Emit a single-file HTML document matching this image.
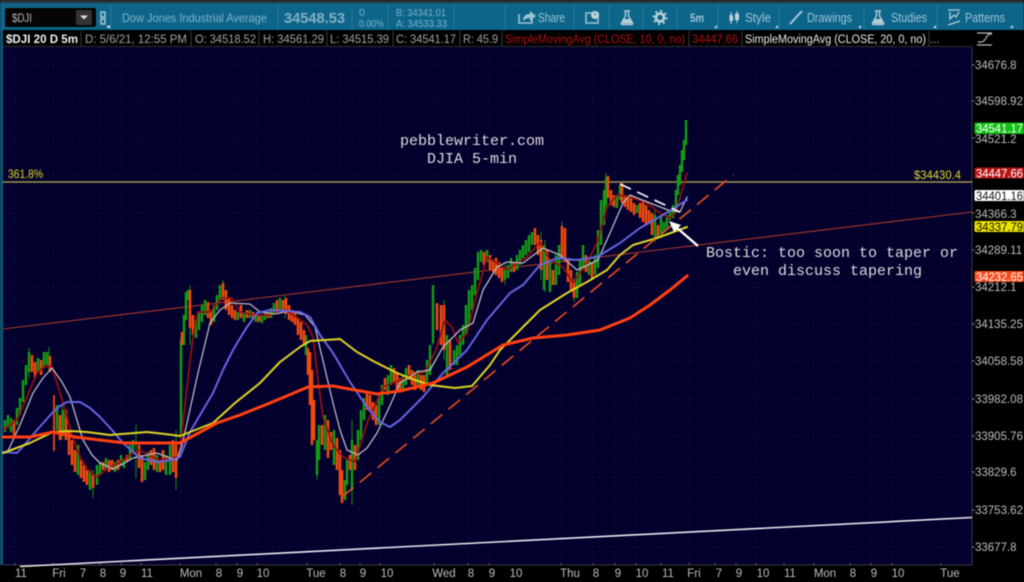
<!DOCTYPE html>
<html><head><meta charset="utf-8"><title>$DJI</title>
<style>
html,body{margin:0;padding:0;background:#000;width:1024px;height:582px;overflow:hidden}
svg{display:block;filter:blur(.4px)}
text{font-family:"Liberation Sans",sans-serif}
.m{font-family:"Liberation Mono",monospace;font-size:15px;fill:#dcdcdc}
.h{font-size:11.5px;fill:#a0a0a0}
.a{font-size:11.5px;fill:#bcbcbc}
.t{font-size:11.5px;fill:#bcbcbc;text-anchor:middle}
.b{font-size:12px;fill:#7fb0c8}
.l{font-size:11.5px;fill:#fff}
.d{font-size:11.5px;fill:#111}
polyline{stroke-linejoin:round;stroke-linecap:round}
</style></head><body>
<svg width="1024" height="582" viewBox="0 0 1024 582" xmlns="http://www.w3.org/2000/svg">
<rect width="1024" height="582" fill="#000"/>
<rect width="1024" height="3" fill="#2c3238"/>
<rect y="3" width="1024" height="27" fill="#0d668a"/>
<rect x="0" y="30" width="3" height="535" fill="#0c5a78"/>
<rect x="3" y="47" width="969" height="518" fill="#03002d"/>
<!-- toolbar -->
<rect x="5" y="8" width="91" height="19" rx="2" fill="#050505"/>
<text x="12" y="22" font-size="12" fill="#b8b8b8" textLength="20" lengthAdjust="spacingAndGlyphs">$DJI</text>
<rect x="76" y="10" width="16" height="15" rx="2" fill="#333"/>
<path d="M80 15.5h8l-4 4z" fill="#ddd"/>
<path d="M101 12h4v5h-4zM101 19h4v5h-4z" fill="none" stroke="#a8c4d0" stroke-width="1.5"/>
<path d="M109 27h-3l3-2z" fill="#ddd"/>
<path d="M111 5v25M278 5v25M352 5v25M388 5v25M454 5v25M505 5v25M574 5v25M609 5v25M643 5v25M677 5v25M718 5v25M779 5v25M864 5v25M937 5v25" stroke="#1e7a9c" stroke-width="1"/>
<text class="b" x="122" y="22" textLength="145" lengthAdjust="spacingAndGlyphs">Dow Jones Industrial Average</text>
<text x="284" y="23" font-size="15" font-weight="bold" fill="#84aec4" textLength="61" lengthAdjust="spacingAndGlyphs">34548.53</text>
<text x="359" y="16" font-size="10.5" fill="#7fb0c8">0</text>
<text x="359" y="27" font-size="10.5" fill="#7fb0c8" textLength="25" lengthAdjust="spacingAndGlyphs">0.00%</text>
<text x="396" y="16" font-size="10.5" fill="#7fb0c8" textLength="50" lengthAdjust="spacingAndGlyphs">B: 34341.01</text>
<text x="396" y="27" font-size="10.5" fill="#7fb0c8" textLength="51" lengthAdjust="spacingAndGlyphs">A: 34533.33</text>
<path d="M519 14v9h13v-5" fill="none" stroke="#a0c4d4" stroke-width="1.6"/>
<path d="M523 21c0-5 3-7 7-7v-3l6 5-6 5v-3c-3 0-5 1-7 3z" fill="#a0c4d4"/>
<text x="538" y="22" font-size="12.5" fill="#9cc2d4" textLength="27" lengthAdjust="spacingAndGlyphs">Share</text>
<path d="M586 13h12v10h-12z" fill="none" stroke="#a0c4d4" stroke-width="1.5"/><circle cx="595" cy="15" r="4" fill="#c0d4dc"/><path d="M595 13v2.5" stroke="#0d668a"/>
<path d="M624 11h6M625.500 11v5l-4 7q-.5 1.500 1 1.500h9q1.500 0 1-1.500l-4-7v-5z" fill="none" stroke="#b4ccd8" stroke-width="1.400"/><path d="M623 19h8l2 4.500h-12z" fill="#b4ccd8"/>
<circle cx="660" cy="17.500" r="4" fill="none" stroke="#c0d4dc" stroke-width="2.600"/><circle cx="660" cy="17.500" r="6.500" fill="none" stroke="#c0d4dc" stroke-width="2" stroke-dasharray="2 3.100"/>
<text x="690" y="22" font-size="11.500" font-weight="bold" fill="#a0c4d4" textLength="14" lengthAdjust="spacingAndGlyphs">5m</text>
<path d="M731 12v12M737 11v12" stroke="#c0d4dc"/><rect x="729.500" y="15" width="3.500" height="6" fill="#c0d4dc"/><rect x="735" y="13.500" width="4" height="6.500" fill="#c0d4dc"/>
<text x="745" y="22" font-size="12.500" fill="#9cc2d4" textLength="26" lengthAdjust="spacingAndGlyphs">Style</text>
<path d="M790 24l12-13" stroke="#b4ccd8" stroke-width="1.800"/>
<text x="807" y="22" font-size="12.500" fill="#9cc2d4" textLength="45" lengthAdjust="spacingAndGlyphs">Drawings</text>
<path d="M875 11h6M876.500 11v5l-4 7q-.5 1.500 1 1.500h9q1.500 0 1-1.500l-4-7v-5z" fill="none" stroke="#b4ccd8" stroke-width="1.400"/><path d="M874 19h8l2 4.500h-12z" fill="#b4ccd8"/>
<text x="891" y="22" font-size="12.500" fill="#9cc2d4" textLength="36" lengthAdjust="spacingAndGlyphs">Studies</text>
<path d="M948 10h12M950 12v7l4-4 2 2 3-5M948 25l12-4" fill="none" stroke="#b4ccd8" stroke-width="1.300"/>
<text x="965" y="22" font-size="12.500" fill="#9cc2d4" textLength="40" lengthAdjust="spacingAndGlyphs">Patterns</text>
<path d="M717 28h-3l3-3zM778 28h-3l3-3zM861 28h-3l3-3zM936 28h-3l3-3zM1013 28h-3l3-3zM716 28h-3zM110 28h-3l3-3z" fill="#d8e4ea"/>
<!-- header row -->
<path d="M81 31v15M191 31v15M259 31v15M327 31v15M393 31v15M460 31v15M502 31v15M689 31v15M742 31v15M929 31v15" stroke="#3a3a3a"/>
<path d="M3 46.500H972" stroke="#2c2c2c"/>
<text x="6" y="43" font-size="12" font-weight="bold" fill="#f0f0f0" textLength="72" lengthAdjust="spacingAndGlyphs">$DJI 20 D 5m</text>
<text class="h" x="85" y="43" textLength="102" lengthAdjust="spacingAndGlyphs">D: 5/6/21, 12:55 PM</text>
<text class="h" x="195" y="43" textLength="61" lengthAdjust="spacingAndGlyphs">O: 34518.52</text>
<text class="h" x="263" y="43" textLength="61" lengthAdjust="spacingAndGlyphs">H: 34561.29</text>
<text class="h" x="330" y="43" textLength="59" lengthAdjust="spacingAndGlyphs">L: 34515.39</text>
<text class="h" x="396" y="43" textLength="60" lengthAdjust="spacingAndGlyphs">C: 34541.17</text>
<text class="h" x="463" y="43" textLength="35" lengthAdjust="spacingAndGlyphs">R: 45.9</text>
<text class="h" x="505" y="43" style="fill:#b01010" textLength="180" lengthAdjust="spacingAndGlyphs">SimpleMovingAvg (CLOSE, 10, 0, no)</text>
<text class="h" x="692" y="43" style="fill:#b01010" textLength="46" lengthAdjust="spacingAndGlyphs">34447.66</text>
<text class="h" x="745" y="43" style="fill:#e8e8e8" textLength="181" lengthAdjust="spacingAndGlyphs">SimpleMovingAvg (CLOSE, 20, 0, no)</text>
<text class="h" x="930" y="43">...</text>
<path d="M977 33h15M977 45h15M978 42h3q3 0 5-4t4-4h2" fill="none" stroke="#b8b8b8" stroke-width="1.200"/>
<!-- grid -->
<path d="M3 65H972M3 101H972M3 138H972M3 175H972M3 213H972M3 250H972M3 287H972M3 324H972M3 361H972M3 399H972M3 436H972M3 472H972M3 510H972M3 547H972" stroke="#1e1e48" stroke-dasharray="1 4"/>
<path d="M15 47V565M53 47V565M80 47V565M100 47V565M121 47V565M141 47V565M180 47V565M216 47V565M237 47V565M257 47V565M307 47V565M340 47V565M360 47V565M380 47V565M434 47V565M468 47V565M489 47V565M561 47V565M593 47V565M615 47V565M636 47V565M661 47V565M689 47V565M715 47V565M736 47V565M756 47V565M784 47V565M814 47V565M850 47V565M871 47V565M892 47V565M941 47V565" stroke="#1e1e48" stroke-dasharray="1 4"/>
<path d="M15 565v-2M53 565v-2M80 565v-2M100 565v-2M121 565v-2M141 565v-2M180 565v-2M216 565v-2M237 565v-2M257 565v-2M307 565v-2M340 565v-2M360 565v-2M380 565v-2M434 565v-2M468 565v-2M489 565v-2M561 565v-2M593 565v-2M615 565v-2M636 565v-2M661 565v-2M689 565v-2M715 565v-2M736 565v-2M756 565v-2M784 565v-2M814 565v-2M850 565v-2M871 565v-2M892 565v-2M941 565v-2" stroke="#666"/>
<path d="M972 47V565H3" fill="none" stroke="#3a3a44"/>
<!-- level lines -->
<path d="M3 182H972" stroke="#a09a48" stroke-width="1.400"/>
<path d="M3 329L972 212" stroke="#a83a28" stroke-width="1.100"/>
<path d="M20 566.500L972 517.500" stroke="#e8e8f0" stroke-width="1.600"/>
<!-- wicks -->
<path d="M29 348V378M49 347V372M62 405V440M93 470V498M136 425V478M176 430V490M181 337V450M190 285V345M223 280V300M285 295V318M352 420V505M317 440V480M342 470V503M433 285V345M444 300V360M505 265V285M545 240V292M562 222V260M574 278V302M606 173V210M655 210V242M541 232V280" stroke="#128a12" stroke-width="1" fill="none"/>
<!-- green candles -->
<path fill="none" stroke="#149a14" stroke-width="2.500" d="M5 420V432M8 415V428M11 418V432M17 408V425M20 398V415M23 380V402M26 365V385M29 352V372M38 358V372M44 352V368M47 352V365M57 405V430M63 410V432M78 445V475M90 470V490M97 465V485M100 462V475M106 458V470M115 462V472M121 455V465M124 460V468M130 445V460M133 440V452M145 462V480M148 452V470M157 455V472M166 455V475M170 445V475M181 340V437M184 315V345M186 292V320M188 290V300M196 320V338M199 312V330M202 305V322M205 300V315M214 305V322M217 295V310M220 285V300M238 312V320M244 312V322M250 310V318M256 314V322M262 316V323M265 312V320M271 308V318M274 303V314M280 298V310M306 335V355M317 440V475M319 425V460M325 415V450M334 430V465M345 480V500M347 460V485M352 440V490M358 430V460M361 410V440M364 398V420M379 395V425M382 385V405M388 375V395M391 365V385M403 375V390M406 368V385M418 370V388M427 360V385M430 345V375M433 285V343M447 335V375M454 350V365M457 345V365M460 335V355M463 325V345M466 305V335M469 290V325M472 285V310M475 268V295M478 252V280M481 250V262M487 250V262M505 270V280M508 265V278M511 258V272M517 255V270M520 250V265M523 245V258M526 240V255M529 235V252M532 232V245M544 245V290M550 262V292M556 255V285M559 245V275M577 272V298M580 260V285M583 245V270M589 258V275M595 255V275M598 230V268M601 200V245M604 190V225M606 178V205M617 195V208M620 185V200M637 205V213M655 215V240M661 215V235M664 222V232M667 215V228M670 210V220M673 205V218M676 190V210M678 175V195M680 165V185M682 150V172M684 140V160M686 120V145"/>
<!-- orange candles -->
<path fill="none" stroke="#f04a0e" stroke-width="2.600" d="M14 420V435M32 355V372M35 362V378M41 360V375M50 356V372M60 415V440M66 410V440M69 430V455M72 440V465M75 450V472M81 460V478M84 465V482M87 470V485M93 475V488M103 462V470M109 460V472M112 460V470M118 460V470M127 455V462M139 445V468M142 455V482M151 450V465M154 448V470M160 462V472M163 450V470M173 440V472M176 445V478M182 332V345M190 290V328M193 315V335M208 302V318M211 310V325M223 283V300M226 290V310M229 298V315M232 305V318M235 310V320M241 305V318M247 310V318M253 312V320M259 316V322M268 312V318M277 300V312M283 300V312M286 298V314M289 305V320M292 310V322M295 312V325M298 318V335M301 322V340M304 330V345M308 348V375M310 352V405M312 370V445M314 400V440M322 425V445M328 420V458M331 432V450M337 438V470M340 450V495M342 470V503M350 455V470M355 445V470M367 392V410M370 395V412M373 402V420M376 405V425M385 378V390M394 368V382M397 372V390M400 378V392M409 365V380M412 370V385M415 372V390M421 375V390M424 375V392M437 303V330M441 305V345M444 305V350M450 340V370M484 252V265M490 255V270M493 260V272M496 258V275M499 262V278M502 268V282M514 262V272M535 228V245M538 235V255M541 240V270M547 250V280M553 270V285M562 226V258M565 228V262M568 258V282M571 270V290M574 280V298M586 255V272M592 262V278M608 176V198M611 190V205M614 195V207M622 183V203M625 195V207M628 198V210M631 195V212M634 203V215M640 203V218M643 200V222M646 205V225M649 210V223M652 213V235M658 225V238"/>
<path d="M54 395V451" stroke="#f04a0e" stroke-width="1.800"/>
<!-- SMAs -->
<polyline fill="none" stroke="#961010" stroke-width="1.700" points="3,430 17,420 37,373 45,366 52,367 63,403 72,435 80,457 88,470 97,477 108,468 120,462 130,455 140,450 150,456 160,460 177,457 180,450 186,395 193,337 198,312 210,312 222,298 232,298 240,312 255,315 270,315 285,310 298,318 307,325 313,337 318,380 323,417 333,445 343,457 355,462 367,423 383,387 400,380 410,375 425,372 436,350 445,320 452,327 458,343 467,333 477,293 487,257 497,263 507,270 527,257 540,242 550,260 563,267 573,283 587,263 597,243 607,207 617,195 630,197 647,203 660,213 670,218 676,212 682,190 687,173"/>
<polyline fill="none" stroke="#b8b8c4" stroke-width="1.300" points="7,453 20,425 33,393 43,378 52,368 62,382 70,397 83,440 92,455 100,463 113,469 123,464 133,458 157,453 170,458 177,460 182,445 187,423 198,373 210,323 220,310 230,303 250,304 260,312 275,314 290,311 305,315 315,327 324,365 333,403 340,430 347,450 358,455 367,448 377,433 388,410 400,383 417,372 430,370 443,347 460,330 473,323 483,290 497,267 507,262 523,263 543,248 560,255 577,270 598,260 610,233 623,203 630,195 650,203 668,210 680,212 687,197"/>
<polyline fill="none" stroke="#6464e0" stroke-width="2" points="3,452 17,453 27,442 37,430 53,412 60,406 67,402 80,402 90,408 100,417 112,430 123,443 140,458 157,462 172,460 180,457 190,432 200,415 213,393 223,370 233,350 245,330 257,313 270,310 285,311 300,312 310,317 320,335 333,353 350,382 367,407 380,422 390,427 400,420 423,397 443,373 467,350 487,320 510,293 523,285 540,265 557,258 577,260 597,257 620,243 640,228 663,215 687,200"/>
<polyline fill="none" stroke="#dcd420" stroke-width="2" points="3,453 30,443 53,432 70,431 87,432 110,435 147,432 165,434 180,436 213,423 235,403 260,383 280,362 300,347 310,341 325,340 340,339 357,352 375,362 397,373 415,380 430,385 455,388 472,386 490,365 500,350 517,333 540,310 567,293 587,282 607,270 620,255 633,245 657,238 687,227"/>
<polyline fill="none" stroke="#ff4010" stroke-width="3" points="3,437 30,437 53,432 75,437 100,440 125,443 150,443 180,443 217,423 240,415 270,403 308,387 333,386 377,394 400,391 433,383 467,367 503,345 533,338 567,335 600,330 630,318 650,305 670,290 687,276"/>
<!-- annotations -->
<path d="M342 497L733 175" stroke="#e04a20" stroke-width="1.700" stroke-dasharray="15 8"/>
<path d="M620 184L680 212" stroke="#f4f4f4" stroke-width="1.700" stroke-dasharray="12 7"/>
<path d="M698 246L676 227" stroke="#fff" stroke-width="2.400"/>
<path d="M669 221L681 225L674 232z" fill="#fff"/>
<text class="m" x="400" y="145">pebblewriter.com</text>
<text class="m" x="427" y="163">DJIA 5-min</text>
<text class="m" x="706" y="257">Bostic: too soon to taper or</text>
<text class="m" x="733" y="275">even discuss tapering</text>
<text x="8" y="178" font-size="12" fill="#e0dc20" textLength="35" lengthAdjust="spacingAndGlyphs">361.8%</text>
<text x="914" y="179" font-size="12" fill="#e0dc20" textLength="47" lengthAdjust="spacingAndGlyphs">$34430.4</text>
<!-- axis -->
<g>
<path d="M972 65h3M972 101h3M972 138h3M972 213h3M972 250h3M972 287h3M972 324h3M972 361h3M972 399h3M972 436h3M972 472h3M972 510h3M972 547h3" stroke="#777"/>
<text class="a" x="975" y="69">34676.8</text>
<text class="a" x="975" y="105">34598.92</text>
<text class="a" x="975" y="143">34521.2</text>
<text class="a" x="975" y="218">34366.3</text>
<text class="a" x="975" y="254">34289.11</text>
<text class="a" x="975" y="291">34212.1</text>
<text class="a" x="975" y="328">34135.25</text>
<text class="a" x="975" y="365">34058.58</text>
<text class="a" x="975" y="403">33982.08</text>
<text class="a" x="975" y="440">33905.76</text>
<text class="a" x="975" y="476">33829.6</text>
<text class="a" x="975" y="514">33753.62</text>
<text class="a" x="975" y="551">33677.8</text>
<rect x="974.500" y="122.500" width="50" height="11.500" rx="1.500" fill="#12c012"/><text class="l" x="976" y="132.500" textLength="47" lengthAdjust="spacingAndGlyphs">34541.17</text>
<rect x="974.500" y="167.500" width="50" height="11" rx="1.500" fill="#b41414"/><text class="l" x="976" y="177.500" textLength="47" lengthAdjust="spacingAndGlyphs">34447.66</text>
<rect x="974.500" y="190" width="50" height="11" rx="1.500" fill="#fff"/><text class="d" x="976" y="200" textLength="47" lengthAdjust="spacingAndGlyphs">34401.16</text>
<rect x="974.500" y="221" width="50" height="11" rx="1.500" fill="#ece400"/><text class="d" x="976" y="231" textLength="47" lengthAdjust="spacingAndGlyphs">34337.79</text>
<rect x="974.500" y="271" width="50" height="11" rx="1.500" fill="#fa4a1a"/><text class="l" x="976" y="281" textLength="47" lengthAdjust="spacingAndGlyphs">34232.65</text>
</g>
<text class="t" x="21" y="577">11</text><text class="t" x="59" y="577">Fri</text><text class="t" x="83" y="577">7</text><text class="t" x="103" y="577">8</text><text class="t" x="123" y="577">9</text><text class="t" x="147" y="577">11</text><text class="t" x="191" y="577">Mon</text><text class="t" x="219" y="577">8</text><text class="t" x="240" y="577">9</text><text class="t" x="263" y="577">10</text><text class="t" x="316" y="577">Tue</text><text class="t" x="343" y="577">8</text><text class="t" x="363" y="577">9</text><text class="t" x="387" y="577">10</text><text class="t" x="444" y="577">Wed</text><text class="t" x="471" y="577">8</text><text class="t" x="492" y="577">9</text><text class="t" x="516" y="577">10</text><text class="t" x="570" y="577">Thu</text><text class="t" x="596" y="577">8</text><text class="t" x="618" y="577">9</text><text class="t" x="642" y="577">10</text><text class="t" x="668" y="577">11</text><text class="t" x="694" y="577">Fri</text><text class="t" x="719" y="577">7</text><text class="t" x="739" y="577">9</text><text class="t" x="763" y="577">10</text><text class="t" x="790" y="577">11</text><text class="t" x="825" y="577">Mon</text><text class="t" x="853" y="577">8</text><text class="t" x="874" y="577">9</text><text class="t" x="898" y="577">10</text><text class="t" x="950" y="577">Tue</text>
</svg>
</body></html>
